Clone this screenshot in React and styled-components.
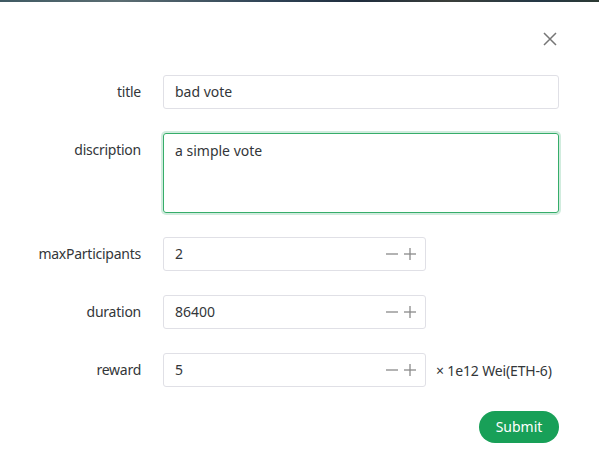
import styled, { createGlobalStyle } from "styled-components";

const GlobalStyle = createGlobalStyle`
  body {
    margin: 0;
    background: #fff;
    font-family: "Noto Sans", "Open Sans", sans-serif;
    font-size: 14px;
    color: #333639;
  }
`;

const Backdrop = styled.div`
  height: 2px;
  background: linear-gradient(90deg, #3f5a63 0%, #5b6d72 20%, #2f4356 45%, #1f2d3d 60%, #3b3f3a 75%, #243846 90%, #2c3a33 100%);
`;

const Card = styled.div`
  background: #fff;
  padding: 0 40px 28px 24px;
`;

const Header = styled.div`
  display: flex;
  justify-content: flex-end;
  height: 73px;
  padding-right: 1px;
  padding-top: 29px;
  box-sizing: border-box;
`;

const CloseButton = styled.button`
  all: unset;
  width: 16px;
  height: 16px;
  display: flex;
  align-items: center;
  justify-content: center;
  color: #767676;
  cursor: pointer;
`;

const Form = styled.form`
  display: flex;
  flex-direction: column;
`;

const Row = styled.div`
  display: flex;
  align-items: flex-start;
  margin-bottom: 24px;
`;

const Label = styled.label`
  width: 117px;
  flex-shrink: 0;
  margin-right: 22px;
  text-align: right;
  line-height: 34px;
  letter-spacing: -0.25px;
`;

const Field = styled.div`
  display: flex;
  align-items: center;
  flex: ${(p) => (p.$narrow ? "0 0 auto" : "1")};
`;

const TextBox = styled.div`
  box-sizing: border-box;
  width: ${(p) => (p.$width ? `${p.$width}px` : "100%")};
  height: ${(p) => p.$height || 34}px;
  border: 1px solid ${(p) => (p.$focused ? "#36ad6a" : "#e0e0e6")};
  box-shadow: ${(p) => (p.$focused ? "0 0 0 2px rgba(24, 160, 88, 0.2)" : "none")};
  border-radius: 3px;
  display: flex;
  align-items: ${(p) => (p.$multiline ? "flex-start" : "center")};
  padding: ${(p) => (p.$multiline ? "6px 11px" : "0 11px")};
  line-height: 22px;
`;

const Value = styled.span`
  flex: 1;
`;

const Steppers = styled.div`
  display: flex;
  gap: 4px;
  color: #8a8a8a;
  margin-right: -3px;
`;

const StepButton = styled.span`
  width: 14px;
  height: 14px;
  display: flex;
  align-items: center;
  justify-content: center;
`;

const Suffix = styled.span`
  margin-left: 10px;
  font-size: 14px;
  letter-spacing: -0.15px;
`;

const Actions = styled.div`
  display: flex;
  justify-content: flex-end;
`;

const SubmitButton = styled.button`
  all: unset;
  box-sizing: border-box;
  width: 80px;
  height: 32px;
  border-radius: 16px;
  background: #18a058;
  color: #fff;
  text-align: center;
  line-height: 32px;
  font-size: 14px;
  cursor: pointer;
`;

const Minus = () => (
  <svg width="14" height="14" viewBox="0 0 14 14">
    <line x1="1" y1="7" x2="13" y2="7" stroke="currentColor" strokeWidth="1.3" />
  </svg>
);

const Plus = () => (
  <svg width="14" height="14" viewBox="0 0 14 14">
    <line x1="1" y1="7" x2="13" y2="7" stroke="currentColor" strokeWidth="1.3" />
    <line x1="7" y1="1" x2="7" y2="13" stroke="currentColor" strokeWidth="1.3" />
  </svg>
);

const NumberField = ({ value, suffix }) => (
  <Field $narrow>
    <TextBox $width={263}>
      <Value>{value}</Value>
      <Steppers>
        <StepButton><Minus /></StepButton>
        <StepButton><Plus /></StepButton>
      </Steppers>
    </TextBox>
    {suffix && <Suffix>{suffix}</Suffix>}
  </Field>
);

export default function App() {
  return (
    <>
      <GlobalStyle />
      <Backdrop />
      <Card>
        <Header>
          <CloseButton aria-label="close">
            <svg width="14" height="14" viewBox="0 0 14 14">
              <path d="M1 1 L13 13 M13 1 L1 13" stroke="currentColor" strokeWidth="1.5" />
            </svg>
          </CloseButton>
        </Header>
        <Form>
          <Row>
            <Label>title</Label>
            <Field>
              <TextBox><Value>bad vote</Value></TextBox>
            </Field>
          </Row>
          <Row>
            <Label>discription</Label>
            <Field>
              <TextBox $multiline $focused $height={80}><Value>a simple vote</Value></TextBox>
            </Field>
          </Row>
          <Row>
            <Label>maxParticipants</Label>
            <NumberField value="2" />
          </Row>
          <Row>
            <Label>duration</Label>
            <NumberField value="86400" />
          </Row>
          <Row>
            <Label>reward</Label>
            <NumberField value="5" suffix="× 1e12 Wei(ETH-6)" />
          </Row>
          <Actions>
            <SubmitButton>Submit</SubmitButton>
          </Actions>
        </Form>
      </Card>
    </>
  );
}
